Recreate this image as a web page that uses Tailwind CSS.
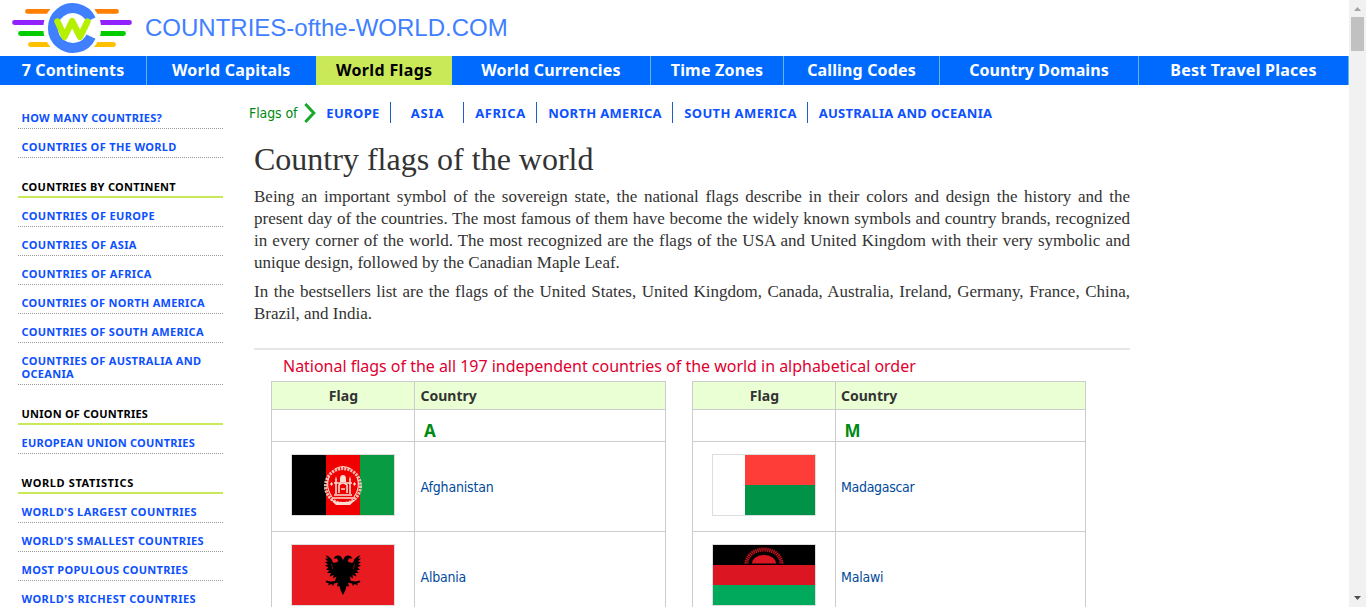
<!DOCTYPE html>
<html lang="en">
<head>
<meta charset="utf-8">
<title>Country flags of the world</title>
<script src="https://cdn.jsdelivr.net/npm/@tailwindcss/browser@4"></script>
</head>
<body class="flex h-[607px] overflow-hidden bg-white font-['Noto_Sans',sans-serif]">
<div class="h-[607px] w-[1349px] shrink-0 overflow-hidden">
  <header class="flex h-14 items-center">
    <svg class="h-14 w-[145px] shrink-0" viewBox="0 0 145 56" fill="none" stroke-linecap="round">
      <g stroke-width="4.8">
        <path stroke="#ff7f00" d="M27.5 11.4H50M96 11.4h20.500"/>
        <path stroke="#9122ff" d="M14.5 22.5H46M100 22.5h29.500"/>
        <path stroke="#00cc00" d="M20.5 33.5H46M100 33.5h23.500"/>
        <path stroke="#ffc000" d="M30.500 44.500H52M94 44.500h19.500"/>
      </g>
      <circle cx="72.200" cy="28" r="29" fill="#fff"/>
      <path stroke="#4080ff" stroke-width="10" stroke-linecap="butt" d="M91 19.500A20 20 0 1 0 91 36.500"/>
      <path stroke="#b4f000" stroke-width="6.400" stroke-linejoin="round" d="M57.500 21.500L64.500 36.800L72.200 21.200L80 36.800L87.500 21.500"/>
    </svg>
    <span class="font-['Liberation_Sans',sans-serif] text-[24px] text-[#4080ff]">COUNTRIES-ofthe-WORLD.COM</span>
  </header>

  <nav class="grid h-[29px] grid-cols-[147px_168.500px_136.500px_199px_133px_156px_199px_210px] bg-[#006aff] text-center text-[16px] leading-[28px] font-bold text-white">
    <a class="border-r border-[#66b3e6] tracking-[0.13px]">7 Continents</a>
    <a class="tracking-[0.22px]">World Capitals</a>
    <a class="bg-[#cae958] pl-px tracking-[0.35px] text-black">World Flags</a>
    <a class="border-r border-[#66b3e6] tracking-[0.18px]">World Currencies</a>
    <a class="border-r border-[#66b3e6] tracking-[0.2px]">Time Zones</a>
    <a class="border-r border-[#66b3e6] tracking-[0.14px]">Calling Codes</a>
    <a class="border-r border-[#66b3e6] tracking-[0.07px]">Country Domains</a>
    <a class="border-r border-[#66b3e6] tracking-[0.25px]">Best Travel Places</a>
  </nav>

  <div class="flex">
    <aside class="ml-[18px] w-[205px] shrink-0 pt-[15px] text-[11px] leading-[13px] font-bold text-[#0c50ff] [&>*]:pl-[3.500px] [&>a]:block [&>a]:border-b [&>a]:border-dotted [&>a]:border-[#999] [&>a]:pt-[11px] [&>a]:pb-1 [&>h3]:border-b-2 [&>h3]:border-[#cae958] [&>h3]:pt-[22px] [&>h3]:pb-[3px] [&>h3]:text-black">
      <a class="tracking-[0.28px]">HOW MANY COUNTRIES?</a>
      <a class="tracking-[0.34px]">COUNTRIES OF THE WORLD</a>
      <h3 class="tracking-[0.28px]">COUNTRIES BY CONTINENT</h3>
      <a class="tracking-[0.36px]">COUNTRIES OF EUROPE</a>
      <a class="tracking-[0.38px]">COUNTRIES OF ASIA</a>
      <a class="tracking-[0.38px]">COUNTRIES OF AFRICA</a>
      <a class="tracking-[0.28px]">COUNTRIES OF NORTH AMERICA</a>
      <a class="tracking-[0.31px]">COUNTRIES OF SOUTH AMERICA</a>
      <a class="tracking-[0.3px]">COUNTRIES OF AUSTRALIA AND<br>OCEANIA</a>
      <h3 class="tracking-[0.23px]">UNION OF COUNTRIES</h3>
      <a class="tracking-[0.24px]">EUROPEAN UNION COUNTRIES</a>
      <h3 class="tracking-[0.62px]">WORLD STATISTICS</h3>
      <a class="tracking-[0.39px]">WORLD'S LARGEST COUNTRIES</a>
      <a class="tracking-[0.36px]">WORLD'S SMALLEST COUNTRIES</a>
      <a class="tracking-[0.3px]">MOST POPULOUS COUNTRIES</a>
      <a class="tracking-[0.43px]">WORLD'S RICHEST COUNTRIES</a>
    </aside>

    <main class="ml-[26px] w-[1000px] pt-[17px]">
      <div class="flex h-[21px] items-center text-center text-[13px] font-bold text-[#0c50ff]">
        <span class="w-[55px] pt-px text-left font-['DejaVu_Sans_Condensed',sans-serif] text-[14px] font-normal tracking-[-0.1px] text-[#008a12]">Flags of</span>
        <svg class="h-5 w-[12px]" viewBox="0 0 12 20" fill="none" stroke="#18a82c" stroke-width="3"><path d="M1.300 1L9.800 10L1.300 19"/></svg>
        <a class="w-[75px] border-r border-[#1c5cd0] pt-px leading-[20px] tracking-[0.35px]">EUROPE</a>
        <a class="w-[73px] border-r border-[#1c5cd0] pt-px pl-px leading-[20px] tracking-[0.8px]">ASIA</a>
        <a class="w-[73px] border-r border-[#1c5cd0] pt-px pl-px leading-[20px] tracking-[0.6px]">AFRICA</a>
        <a class="w-[136px] border-r border-[#1c5cd0] pt-px pl-px leading-[20px] tracking-[0.31px]">NORTH AMERICA</a>
        <a class="w-[135px] border-r border-[#1c5cd0] pt-px pl-px leading-[20px] tracking-[0.39px]">SOUTH AMERICA</a>
        <a class="w-[195px] pt-px leading-[20px] tracking-[0.28px]">AUSTRALIA AND OCEANIA</a>
      </div>

      <article class="ml-[5px] w-[876px] font-['Liberation_Serif',serif] text-[17px] leading-[22px] text-[#333]">
        <h1 class="mt-[16px] text-[32px] leading-[40px]">Country flags of the world</h1>
        <p class="mt-[7px] text-justify">Being an important symbol of the sovereign state, the national flags describe in their colors and design the history and the present day of the countries. The most famous of them have become the widely known symbols and country brands, recognized in every corner of the world. The most recognized are the flags of the USA and United Kingdom with their very symbolic and unique design, followed by the Canadian Maple Leaf.</p>
        <p class="mt-[7px] text-justify">In the bestsellers list are the flags of the United States, United Kingdom, Canada, Australia, Ireland, Germany, France, China, Brazil, and India.</p>
        <hr class="mt-[23px] border-0 border-t-2 border-[#e6e6e6]">
      </article>

      <h2 class="mt-[5px] ml-[34px] h-[26px] text-[16px] leading-[23px] tracking-[-0.02px] text-[#e00030]">National flags of the all 197 independent countries of the world in alphabetical order</h2>

      <div class="ml-[22px] flex gap-[26px] text-[14px] text-[#333]">
        <div class="grid grid-cols-[143px_251px] grid-rows-[28px_32px_90px_90px] border-t border-l border-[#ccc] [&>*]:border-r [&>*]:border-b [&>*]:border-[#ccc]">
          <div class="bg-[#eaffd3] pl-px text-center leading-[27px] font-bold tracking-[0.1px]">Flag</div>
          <div class="bg-[#eaffd3] pl-[5.500px] leading-[27px] font-bold">Country</div>
          <div></div>
          <div class="pt-[9px] pl-[9px] text-[17px] leading-[24px] font-bold text-[#008a12]">A</div>
          <div class="flex justify-center pt-3">
            <svg class="h-[62px] w-[104px] border border-[#ddd]" viewBox="0 0 102 60">
              <path d="M0 0h34v60H0z"/><path fill="#f00000" d="M34 0h34v60H34z"/><path fill="#089b42" d="M68 0h34v60H68z"/>
              <g fill="none" stroke="#f8ddd0">
                <circle cx="51" cy="31" r="17.500" stroke-width="3.200" stroke-dasharray="2.200 1" stroke-opacity=".85"/>
                <path stroke-width="1.100" d="M43 14q8-5 16 0M39 45q12 7 24 0M37 22q-4 10 3 20M65 22q4 10-3 20"/>
                <path stroke-width="1.600" d="M44 39V25M58 39V25M42 40h18M42 28h18M47 38v-8q4-4 8 0v8M40 43h22M49 34h4"/>
              </g>
              <path fill="#f8ddd0" d="M48 27v-3q0-4 3-4t3 4v3zM43 25l1-4 1 4zM57 25l1-4 1 4zM41 47h20l-3 3H44zM38 29l1.500-2 1.500 2-1.500 2zM61 29l1.500-2 1.500 2-1.500 2z"/>
            </svg>
          </div>
          <div class="flex items-center pt-0.5 pl-[5.500px] font-['DejaVu_Sans_Condensed',sans-serif] tracking-[-0.16px] text-[#004a9c]">Afghanistan</div>
          <div class="flex justify-center pt-3">
            <svg class="h-[62px] w-[104px] border border-[#ddd]" viewBox="0 0 102 60">
              <path fill="#e81b21" d="M0 0h102v60H0z"/>
              <path d="M51 15L49 11.500Q46 9.500 43 11.500L41.500 13.500L45 13.500L46.500 16Q44 18.500 41 17.500Q39.500 13 36 11L33.500 10.500L36 13.500L33 13.500L36 16.500L33 17L36 19.500L33 20.500L36.500 22.500L34 24.500L37.500 25.500L35 28L39 28L37.500 31.500L41.500 30L41 33.500L44.500 31.500L43 36L38 36.500L34.500 35.500L33.500 37L37 38.500L36 40.500L39.500 39L41 41L42 38.500L46 37.500L45 41.500L47.500 41L48.500 45L51 50L53.500 45L54.500 41L57 41.500L56 37.500L60 38.500L61 41L62.500 39L66 40.500L65 38.500L68.500 37L67.500 35.500L64 36.500L59 36L57.500 31.500L61 33.500L60.500 30L64.500 31.500L63 28L67 28L64.500 25.500L68 24.500L65.500 22.500L69 20.500L66 19.500L69 17L66 16.500L69 13.500L66 13.500L68.500 10.500L66 11Q62.500 13 61 17.500Q58 18.500 55.500 16L57 13.500L60.500 13.500L59 11.500Q56 9.500 53 11.500Z"/>
              <path stroke="#e81b21" stroke-width=".5" fill="none" d="M39.500 19l1 5M62.500 19l-1 5"/>
            </svg>
          </div>
          <div class="flex items-center pt-0.5 pl-[5.500px] font-['DejaVu_Sans_Condensed',sans-serif] tracking-[-0.22px] text-[#004a9c]">Albania</div>
        </div>

        <div class="grid grid-cols-[143px_250px] grid-rows-[28px_32px_90px_90px] border-t border-l border-[#ccc] [&>*]:border-r [&>*]:border-b [&>*]:border-[#ccc]">
          <div class="bg-[#eaffd3] pl-px text-center leading-[27px] font-bold tracking-[0.1px]">Flag</div>
          <div class="bg-[#eaffd3] pl-[5px] leading-[27px] font-bold">Country</div>
          <div></div>
          <div class="pt-[9px] pl-[8.500px] text-[17px] leading-[24px] font-bold text-[#008a12]">M</div>
          <div class="flex justify-center pt-3">
            <svg class="h-[62px] w-[104px] border border-[#ddd]" viewBox="0 0 102 60">
              <path fill="#fff" d="M0 0h32v60H0z"/><path fill="#ff3d38" d="M32 0h70v30H32z"/><path fill="#009246" d="M32 30h70v30H32z"/>
            </svg>
          </div>
          <div class="flex items-center pt-0.5 pl-[5px] font-['DejaVu_Sans_Condensed',sans-serif] tracking-[-0.3px] text-[#004a9c]">Madagascar</div>
          <div class="flex justify-center pt-3">
            <svg class="h-[62px] w-[104px] border border-[#ddd]" viewBox="0 0 102 60">
              <path d="M0 0h102v20H0z"/><path fill="#db1522" d="M0 20h102v20H0z"/><path fill="#00a95c" d="M0 40h102v20H0z"/>
              <path fill="#db1522" d="M39 18.500a12 8.500 0 0 1 24 0z"/>
              <path fill="none" stroke="#c4121e" stroke-width="4" stroke-dasharray="1.300 .7" d="M33.500 18.500a17.500 14 0 0 1 35 0"/>
            </svg>
          </div>
          <div class="flex items-center pt-0.5 pl-[5px] font-['DejaVu_Sans_Condensed',sans-serif] tracking-[-0.2px] text-[#004a9c]">Malawi</div>
        </div>
      </div>
    </main>
  </div>
</div>

<div class="flex h-[607px] w-[17px] shrink-0 flex-col items-center bg-[#f1f1f1]">
  <svg class="h-[17px] w-[17px]" viewBox="0 0 17 17"><path fill="#a3a3a3" d="M5 11h7L8.500 7z"/></svg>
  <div class="h-[34px] w-[13px] bg-[#c1c1c1]"></div>
  <svg class="mt-auto h-[17px] w-[17px]" viewBox="0 0 17 17"><path fill="#505050" d="M5 6h7L8.500 10z"/></svg>
</div>
</body>
</html>
